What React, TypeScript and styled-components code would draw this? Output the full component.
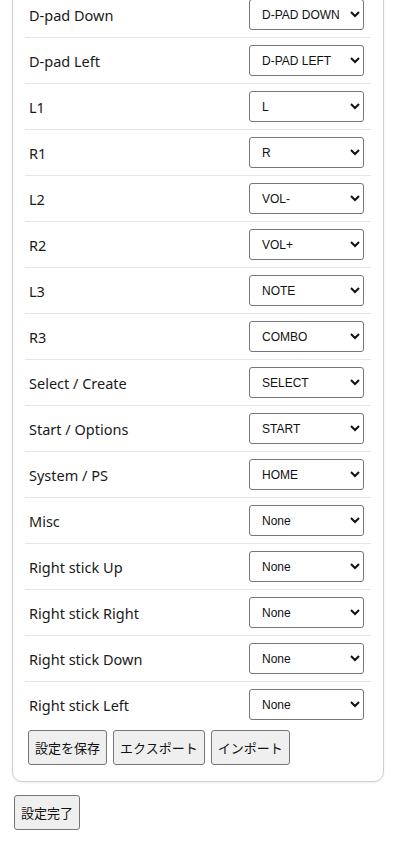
import React, { useState } from 'react'
import styled, { createGlobalStyle } from 'styled-components'

const GlobalStyle = createGlobalStyle`
    html, body {
        margin: 0;
        padding: 0;
        background: #ffffff;
    }
    body {
        font-family: "Noto Sans", "Noto Sans CJK JP", sans-serif;
        color: #1a1a1a;
    }
`;

const Page = styled.div`
    padding: 0 12px 24px 12px;
`;

// ページは途中までスクロールされた状態
const Card = styled.section`
    margin-top: -41px;
    padding: 32px 12px 16px 12px;
    border: 1px solid #cfcfcf;
    border-radius: 10px;
    box-shadow: 0 1px 2px rgba(0, 0, 0, 0.08);
`;

const MapList = styled.ul`
    list-style: none;
    margin: 0;
    padding: 0;
`;

const Row = styled.li`
    display: flex;
    align-items: center;
    justify-content: space-between;
    padding: 7px 7px 7px 4px;
    border-bottom: 1px solid #e4e4e4;
    &:last-child {
        border-bottom: none;
    }
`;

const Label = styled.span`
    font-size: 14.5px;
    color: #1a1a1a;
`;

const Select = styled.select`
    width: 115px;
    height: 31px;
    padding: 0 4px 0 8px;
    font-family: "Liberation Sans", Arial, sans-serif;
    font-size: 12px;
    color: #111;
    background: #ffffff;
    border: 1px solid #767676;
    border-radius: 3px;
`;

const ButtonBar = styled.div`
    display: flex;
    gap: 6px;
    padding: 3px 3px 0 3px;
`;

const Button = styled.button`
    height: 35px;
    padding: 0 6px;
    font-family: "Noto Sans CJK JP", sans-serif;
    font-size: 13px;
    color: #111;
    background: #efefef;
    border: 1px solid #767676;
    border-radius: 3px;
`;

const Footer = styled.div`
    padding: 13px 2px 0 2px;
`;

interface IMapping {
    label: string,
    value: string,
}

const OPTIONS = [
    'None', 'D-PAD UP', 'D-PAD DOWN', 'D-PAD LEFT', 'D-PAD RIGHT',
    'L', 'R', 'VOL-', 'VOL+', 'NOTE', 'COMBO', 'SELECT', 'START', 'HOME',
]

const INITIAL: IMapping[] = [
    { label: 'D-pad Down', value: 'D-PAD DOWN' },
    { label: 'D-pad Left', value: 'D-PAD LEFT' },
    { label: 'L1', value: 'L' },
    { label: 'R1', value: 'R' },
    { label: 'L2', value: 'VOL-' },
    { label: 'R2', value: 'VOL+' },
    { label: 'L3', value: 'NOTE' },
    { label: 'R3', value: 'COMBO' },
    { label: 'Select / Create', value: 'SELECT' },
    { label: 'Start / Options', value: 'START' },
    { label: 'System / PS', value: 'HOME' },
    { label: 'Misc', value: 'None' },
    { label: 'Right stick Up', value: 'None' },
    { label: 'Right stick Right', value: 'None' },
    { label: 'Right stick Down', value: 'None' },
    { label: 'Right stick Left', value: 'None' },
]

function App() {
    const [mappings, setMappings] = useState<IMapping[]>(INITIAL);

    const onChange = (idx: number, value: string) => {
        setMappings(prev => prev.map((m, i) => i === idx ? { ...m, value } : m));
    }

    return (
        <Page>
            <GlobalStyle />
            <Card>
                <MapList>
                    {mappings.map((m, idx) =>
                        <Row key={m.label}>
                            <Label>{m.label}</Label>
                            <Select value={m.value} onChange={e => onChange(idx, e.target.value)}>
                                {OPTIONS.map(o => <option key={o} value={o}>{o}</option>)}
                            </Select>
                        </Row>
                    )}
                </MapList>
                <ButtonBar>
                    <Button>設定を保存</Button>
                    <Button>エクスポート</Button>
                    <Button>インポート</Button>
                </ButtonBar>
            </Card>
            <Footer>
                <Button>設定完了</Button>
            </Footer>
        </Page>
    )
}

export default App
